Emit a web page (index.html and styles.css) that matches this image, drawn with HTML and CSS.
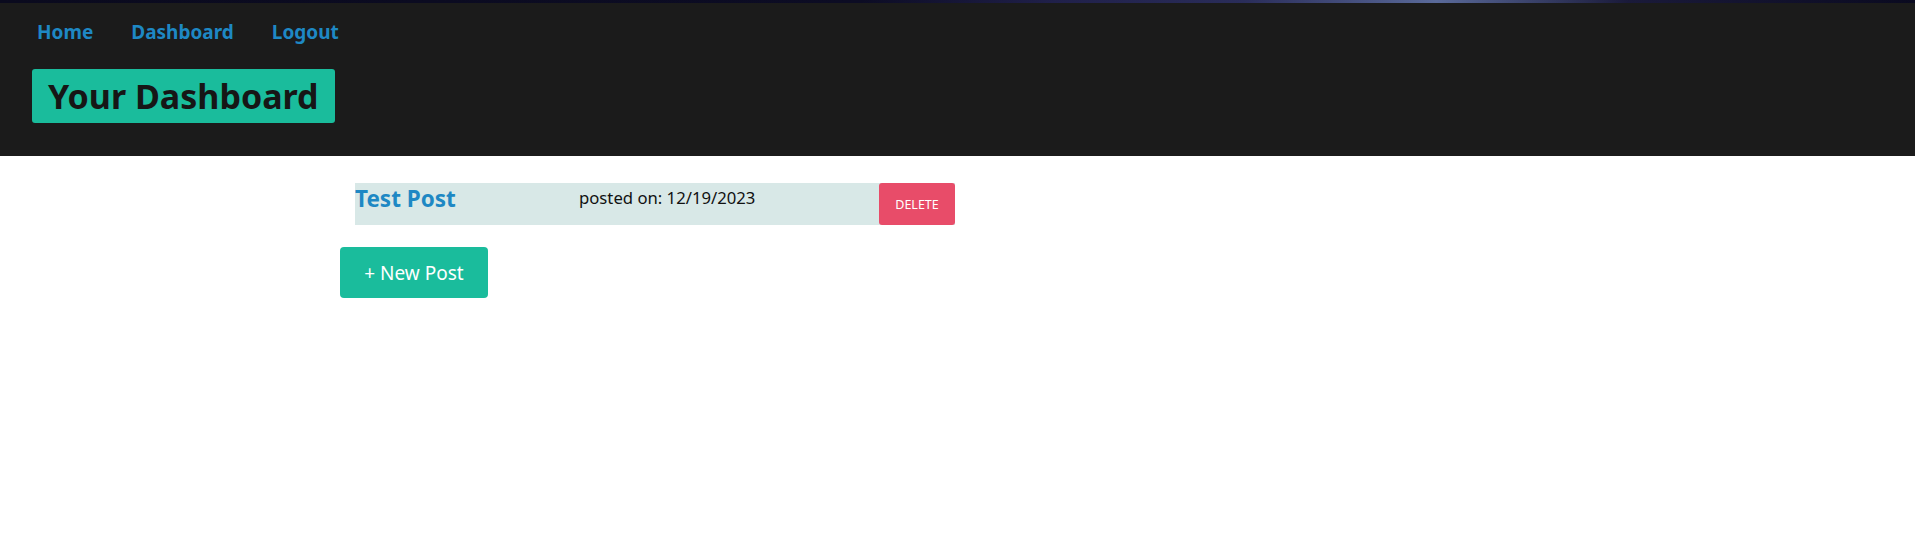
FILE: index.html
```html
<!DOCTYPE html>
<html lang="en">
<head>
<meta charset="utf-8">
<title>Your Dashboard</title>
<link rel="stylesheet" href="styles.css">
</head>
<body>
<header class="site-header">
  <div class="top-strip"></div>
  <nav class="nav">
    <a href="#" class="nav-link">Home</a>
    <a href="#" class="nav-link">Dashboard</a>
    <a href="#" class="nav-link">Logout</a>
  </nav>
  <h1 class="page-title">Your Dashboard</h1>
</header>
<main class="content">
  <div class="post-row">
    <a href="#" class="post-title">Test Post</a>
    <span class="post-date">posted on: 12/19/2023</span>
    <button class="btn-delete">DELETE</button>
  </div>
  <button class="btn-new">+ New Post</button>
</main>
</body>
</html>
```
FILE: styles.css
```css
* { box-sizing: border-box; }
body {
  margin: 0;
  font-family: "Noto Sans", "Open Sans", sans-serif;
  background: #ffffff;
  color: #111;
}
.site-header {
  background: #1b1b1b;
  height: 156px;
  display: flex;
  flex-direction: column;
}
.top-strip {
  height: 3px;
  background: linear-gradient(90deg, #0a0a1e 0%, #0c0c24 45%, #20204a 55%, #2a2d5a 65%, #5a6a9a 75%, #1a1a3a 85%, #0a0a20 100%);
}
.nav {
  display: flex;
  gap: 38px;
  padding: 17px 0 0 37px;
}
.nav-link {
  color: #1e88c4;
  font-weight: 700;
  font-size: 19px;
  text-decoration: none;
  line-height: 25px;
}
.page-title {
  align-self: flex-start;
  margin: 24px 0 0 32px;
  background: #1abc9c;
  color: #161616;
  font-size: 34px;
  font-weight: 700;
  line-height: 54px;
  height: 54px;
  padding: 0 16px;
  border-radius: 3px;
}
.content {
  padding: 26px 0 0 340px;
}
.post-row {
  display: flex;
  align-items: flex-start;
  width: 600px;
  height: 42px;
  margin-left: 15px;
  margin-top: 1px;
  background: #d8e8e7;
}
.post-title {
  color: #1e88c4;
  font-weight: 700;
  font-size: 22.5px;
  text-decoration: none;
  line-height: 32px;
  width: 224px;
}
.post-date {
  font-size: 16.7px;
  line-height: 24px;
  padding-top: 3px;
  color: #111;
}
.btn-delete {
  margin-left: auto;
  width: 76px;
  height: 42px;
  border: none;
  border-radius: 3px;
  background: #e84c69;
  color: #fff;
  font-family: inherit;
  font-size: 12.5px;
}
.btn-new {
  display: block;
  margin-top: 22px;
  width: 148px;
  height: 51px;
  border: none;
  border-radius: 4px;
  background: #1abc9c;
  color: #fff;
  font-family: inherit;
  font-size: 19px;
}
```
